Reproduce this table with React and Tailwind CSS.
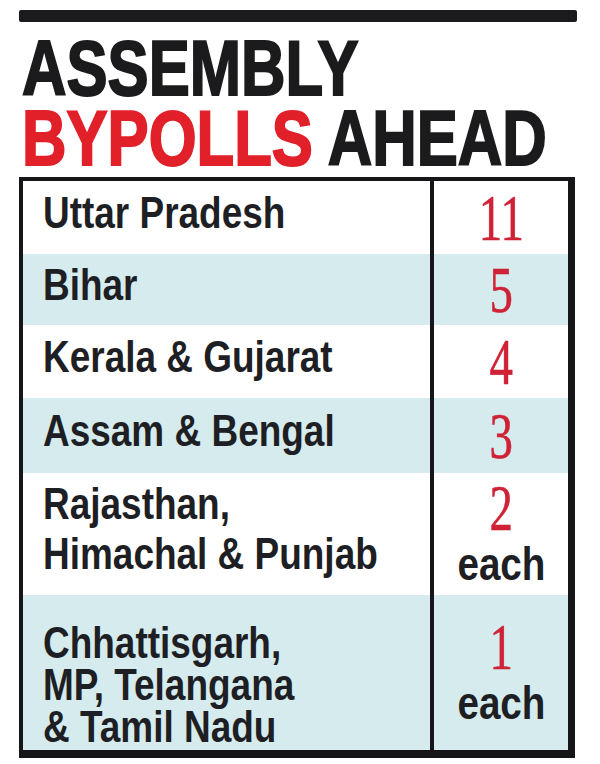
import React from "react";

const rows = [
  { lines: ["Uttar Pradesh"], num: "11", h: "h-[73px]", bg: "bg-white" },
  { lines: ["Bihar"], num: "5", h: "h-[71px]", bg: "bg-[#d5ebee]" },
  { lines: ["Kerala & Gujarat"], num: "4", h: "h-[73px]", bg: "bg-white" },
  { lines: ["Assam & Bengal"], num: "3", h: "h-[75px]", bg: "bg-[#d5ebee]" },
  { lines: ["Rajasthan,", "Himachal & Punjab"], num: "2", each: true, h: "h-[122px]", bg: "bg-white", text: "justify-start pt-[6px] leading-[50px]" },
  { lines: ["Chhattisgarh,", "MP, Telangana", "& Tamil Nadu"], num: "1", each: true, h: "h-[155px]", bg: "bg-[#d5ebee]", text: "justify-start pt-[27px] leading-[42px]" },
];

const App = () => {
  return (
    <div className="w-[600px] h-[764px] bg-white pt-[10px] pl-[19px] font-['Liberation_Sans',Arial,sans-serif]">
      <div className="w-[558px] h-[12px] bg-[#1b1b1d] rounded-[2px]" />

      {/* headline */}
      <h1 className="mt-[11px] pl-[3px] text-[77px] leading-[70px] font-bold text-[#1b1a1c] [-webkit-text-stroke:2px_#1b1a1c]">
        <div className="origin-left scale-x-[0.8] whitespace-nowrap">ASSEMBLY</div>
        <div className="origin-left scale-x-[0.8] whitespace-nowrap">
          <span className="text-[#e1202a] [-webkit-text-stroke:2px_#e1202a]">BYPOLLS</span> AHEAD
        </div>
      </h1>

      {/* table */}
      <div className="mt-[4px] w-[556px] border-t-4 border-l-4 border-r-[7px] border-b-[8px] border-[#161618] flex flex-col">
        {rows.map((r, i) => (
          <div key={i} className={`flex ${r.h} ${r.bg}`}>
            <div
              className={`w-[407px] shrink-0 overflow-hidden flex flex-col pl-[20px] text-[44px] font-bold text-[#1e1f24] ${
                r.text || "justify-center pb-[9px] leading-[48px]"
              }`}
            >
              {r.lines.map((l, j) => (
                <div key={j} className="origin-left scale-x-[0.84] whitespace-nowrap">
                  {l}
                </div>
              ))}
            </div>
            <div className="w-[138px] shrink-0 border-l-4 border-[#161618] flex flex-col items-center justify-center">
              <span className="inline-block scale-x-[0.72] font-['Liberation_Serif',serif] text-[65px] leading-[54px] text-[#cf2236] [-webkit-text-stroke:0.6px_#cf2236]">
                {r.num}
              </span>
              {r.each && (
                <span className="mt-[6px] inline-block scale-x-[0.84] text-[46px] leading-[46px] font-bold text-[#1e1f24]">
                  each
                </span>
              )}
            </div>
          </div>
        ))}
      </div>
    </div>
  );
};

export default App;
